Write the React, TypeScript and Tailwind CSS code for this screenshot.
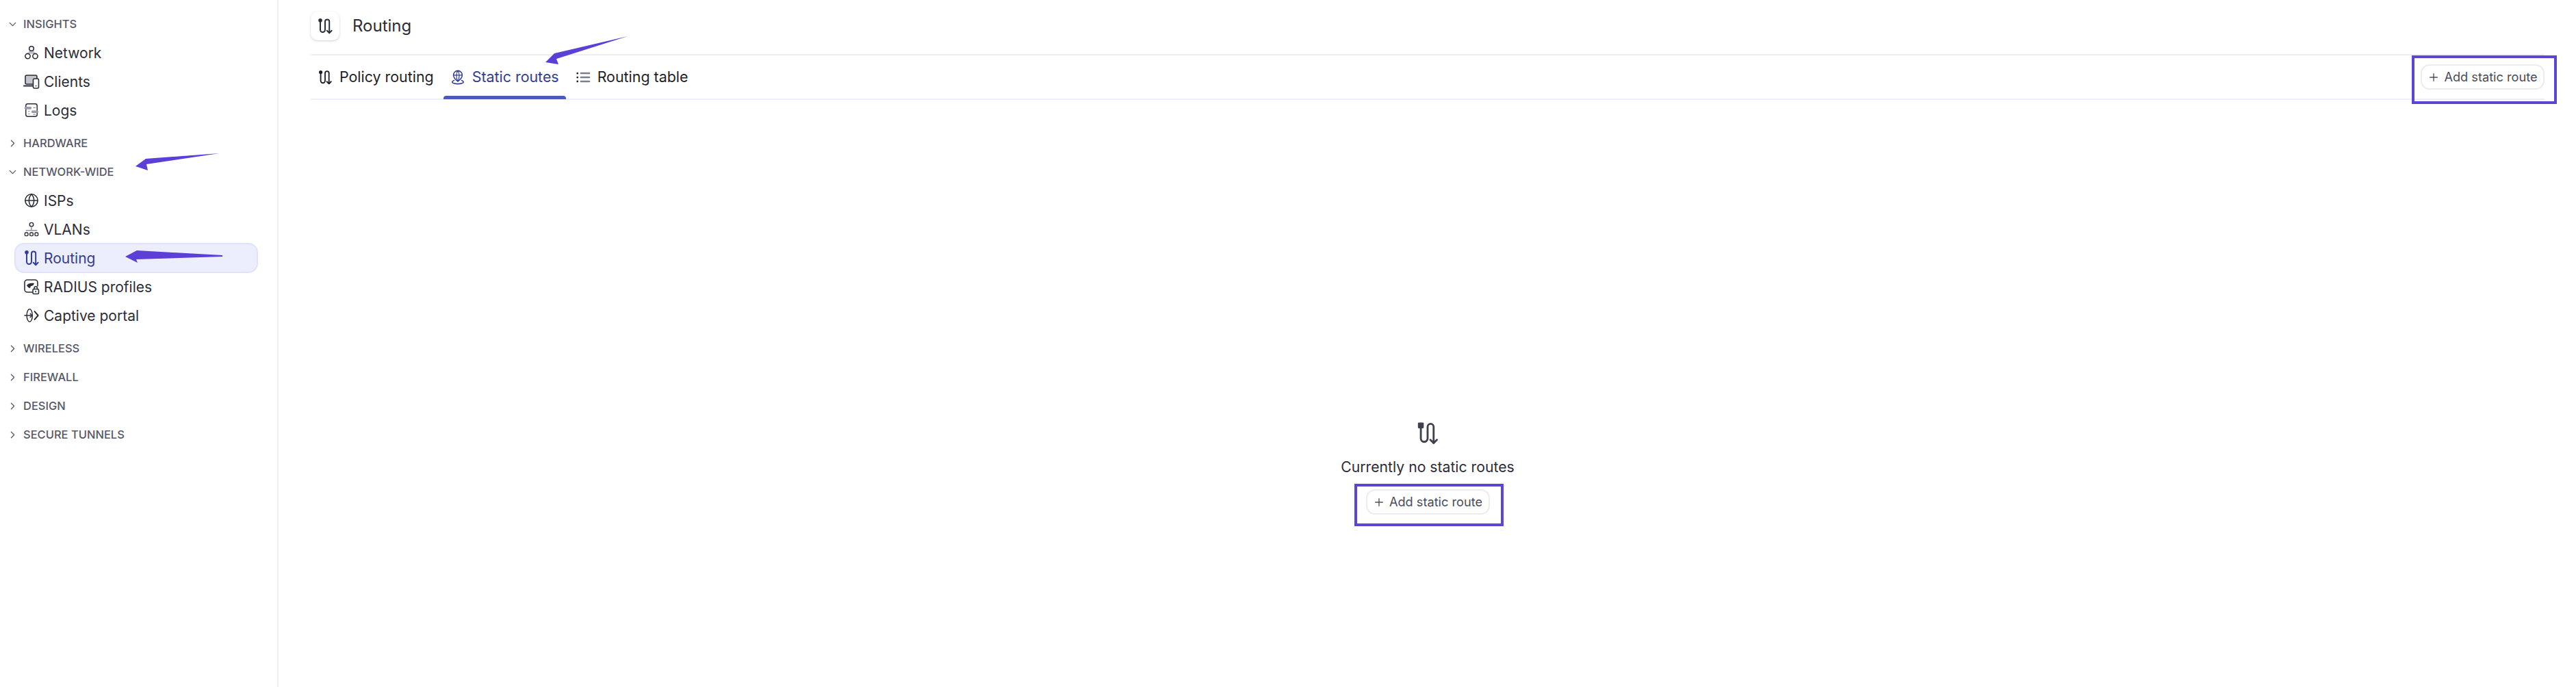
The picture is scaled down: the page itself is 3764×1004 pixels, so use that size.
import { ReactNode } from 'react';
import { ChevronDown, ChevronRight, Globe, Plus } from 'lucide-react';

// icons drawn by hand, lucide has no close match for these
function RoutingIcon({ className }: { className?: string }) {
  return (
    <svg viewBox="0 0 24 24" fill="none" stroke="currentColor" strokeWidth="2" strokeLinecap="round" strokeLinejoin="round" className={className}>
      <circle cx="5" cy="3.8" r="2.8" fill="currentColor" stroke="none" />
      <path d="M5 6v11.5a3.5 3.5 0 0 0 7 0V5.5a3 3 0 0 1 6.2 0V22" />
      <path d="M14.8 18.8l3.4 3.4 3.4-3.4" />
    </svg>
  );
}

function BlockRoutingIcon() {
  return (
    <svg viewBox="0 0 24 24" fill="none" stroke="currentColor" strokeWidth="2" strokeLinecap="round" strokeLinejoin="round" className="w-[34px] h-[34px] text-[#3f414e]">
      <rect x="2" y="1" width="6" height="6" rx="1" fill="currentColor" stroke="none" />
      <path d="M5 6v11.5a3.5 3.5 0 0 0 7 0V5.5a3 3 0 0 1 6.2 0V22" />
      <path d="M14.8 18.8l3.4 3.4 3.4-3.4" />
    </svg>
  );
}

function NetworkIcon() {
  return (
    <svg viewBox="0 0 24 24" fill="none" stroke="currentColor" strokeWidth="1.7" className="w-[22px] h-[22px]">
      <path d="M9 8l-3 6h12l-3-6z" fill="#b9bcc6" stroke="none" />
      <circle cx="12" cy="5.5" r="3.6" fill="#fff" />
      <circle cx="6" cy="17.5" r="4" fill="#fff" />
      <circle cx="18" cy="17.5" r="4" fill="#fff" />
    </svg>
  );
}

function ClientsIcon() {
  return (
    <svg viewBox="0 0 24 24" fill="none" stroke="currentColor" strokeWidth="1.6" strokeLinecap="round" className="w-[24px] h-[24px]">
      <rect x="3" y="3" width="17" height="13" rx="2" fill="#c4c6ce" />
      <path d="M1 18.5h14" strokeWidth="2" />
      <rect x="14.5" y="8" width="8" height="14" rx="2" fill="#fff" />
      <path d="M18.5 18.5v.2" />
    </svg>
  );
}

function LogsIcon() {
  return (
    <svg viewBox="0 0 24 24" fill="none" stroke="currentColor" strokeWidth="1.6" strokeLinecap="round" className="w-[22px] h-[22px]">
      <rect x="3" y="2" width="18" height="20" rx="3" />
      <rect x="1" y="6.5" width="11" height="4" rx="1.5" fill="#9a9da8" stroke="none" />
      <rect x="12" y="12.5" width="11" height="4" rx="1.5" fill="#9a9da8" stroke="none" />
      <path d="M15 8h3M7 14h2M7 18h2M15 19h3" strokeWidth="1.2" stroke="#9a9da8" />
    </svg>
  );
}

function VlansIcon() {
  return (
    <svg viewBox="0 0 24 24" fill="none" stroke="currentColor" strokeWidth="1.6" className="w-[22px] h-[22px]">
      <circle cx="12" cy="4.5" r="3" />
      <path d="M12 8v6M3 14h18" stroke="#8d909c" />
      <rect x="1.5" y="17.5" width="5" height="5" rx="1.5" />
      <rect x="9.5" y="17.5" width="5" height="5" rx="1.5" />
      <rect x="17.5" y="17.5" width="5" height="5" rx="1.5" />
    </svg>
  );
}

function RadiusIcon() {
  return (
    <svg viewBox="0 0 24 24" fill="none" stroke="currentColor" strokeWidth="1.6" strokeLinecap="round" className="w-[24px] h-[24px]">
      <path d="M13 20H6a4 4 0 0 1-4-4V6a4 4 0 0 1 4-4h11a4 4 0 0 1 4 4v5" />
      <path d="M5 10c2-3 6-4 11-3-1 3-3 4-5 4l-1 3c-2 0-4-2-5-4z" fill="currentColor" stroke="none" />
      <rect x="14" y="15.5" width="8.5" height="7" rx="1.5" fill="#fff" />
      <path d="M16 15.5v-1.5a2.2 2.2 0 0 1 4.4 0v1.5" />
      <path d="M18.2 18.5v1" />
    </svg>
  );
}

function PortalIcon() {
  return (
    <svg viewBox="0 0 24 24" fill="none" stroke="currentColor" strokeWidth="1.6" strokeLinecap="round" strokeLinejoin="round" className="w-[22px] h-[22px]">
      <ellipse cx="9" cy="12" rx="4.5" ry="10" />
      <path d="M1 12h12" />
      <path d="M10 9l3 3-3 3" />
      <path d="M17 5.5l5.5 6.5-5.5 6.5" strokeWidth="2.2" />
    </svg>
  );
}

function StaticIcon() {
  return (
    <svg viewBox="0 0 24 24" fill="none" stroke="currentColor" strokeWidth="1.7" strokeLinecap="round" strokeLinejoin="round" className="w-[22px] h-[22px]">
      <path d="M12 18.5c-4-3-7-6-7-10a7 7 0 0 1 14 0c0 4-3 7-7 10z" />
      <path d="M5.5 8.5h13M12 1.5c-3 4-3 11 0 17M12 1.5c3 4 3 11 0 17" strokeWidth="1.3" />
      <path d="M6 17c-2 .8-3 1.6-3 2.5C3 21 7 22.5 12 22.5s9-1.5 9-3c0-.9-1-1.7-3-2.5" />
    </svg>
  );
}

function TableIcon() {
  return (
    <svg viewBox="0 0 24 24" fill="none" strokeLinecap="round" className="w-[22px] h-[22px]">
      <path d="M3 5.5v.1M3 12v.1M3 18.5v.1" stroke="#1f2430" strokeWidth="3" />
      <path d="M8.5 5.5H22M8.5 12H22M8.5 18.5H22" stroke="#7d808c" strokeWidth="2.6" />
    </svg>
  );
}

function SectionRow({ label, open }: { label: string; open?: boolean }) {
  return (
    <div className="h-[42px] flex items-center text-[#565869]">
      <span className="w-[34px] flex justify-center pl-[2px]">
        {open ? <ChevronDown className="w-[17px] h-[17px]" strokeWidth={1.8} /> : <ChevronRight className="w-[17px] h-[17px]" strokeWidth={1.8} />}
      </span>
      <span className="text-[16.5px] font-medium">{label}</span>
    </div>
  );
}

function NavItem({ icon, label, active }: { icon: ReactNode; label: string; active?: boolean }) {
  const cls = active
    ? 'h-[44px] -my-px text-[#323d96] bg-[#eceefd] border-2 border-[#dfe3fa] rounded-[14px]'
    : 'h-[42px] text-[#2b2d3a] border-2 border-transparent';
  return (
    <div className={'ml-[21px] w-[356px] flex items-center pl-[11px] ' + cls}>
      <span className="w-[24px] flex justify-center mr-[6px]">{icon}</span>
      <span className="text-[21px] leading-none">{label}</span>
    </div>
  );
}

function AddButton({ frame }: { frame: string }) {
  return (
    <button className="relative w-[181px] h-[37px] flex items-center justify-center gap-[6px] rounded-[13px] border-2 border-[#ececef] bg-white text-[#4a4c5c] text-[18.2px]">
      <Plus className="w-[18px] h-[18px]" strokeWidth={1.8} />
      Add static route
      <span className={'absolute border-[4px] border-[#5b45d3] ' + frame} />
    </button>
  );
}

function Tab({ icon, label, active }: { icon: ReactNode; label: string; active?: boolean }) {
  return (
    <div className={'relative h-full flex items-center gap-[10px] px-[10px] text-[21.4px] ' + (active ? 'text-[#323d96]' : 'text-[#1d1f2b]')}>
      {icon}
      {label}
      {active && <span className="absolute left-0 right-0 bottom-[-1px] h-[5px] rounded-t-[4px] bg-[#4a5bbd]" />}
    </div>
  );
}

export default function App() {
  return (
    <div className="relative h-screen flex bg-white overflow-hidden font-['Inter',sans-serif]">
      <aside className="w-[407px] shrink-0 border-r-2 border-[#eceef2] pt-[14px] flex flex-col">
        <SectionRow label="INSIGHTS" open />
        <div className="pb-[6px] flex flex-col">
          <NavItem icon={<NetworkIcon />} label="Network" />
          <NavItem icon={<ClientsIcon />} label="Clients" />
          <NavItem icon={<LogsIcon />} label="Logs" />
        </div>
        <SectionRow label="HARDWARE" />
        <SectionRow label="NETWORK-WIDE" open />
        <div className="pb-[6px] flex flex-col">
          <NavItem icon={<Globe className="w-[22px] h-[22px]" strokeWidth={1.7} />} label="ISPs" />
          <NavItem icon={<VlansIcon />} label="VLANs" />
          <NavItem icon={<RoutingIcon className="w-[24px] h-[24px]" />} label="Routing" active />
          <NavItem icon={<RadiusIcon />} label="RADIUS profiles" />
          <NavItem icon={<PortalIcon />} label="Captive portal" />
        </div>
        <SectionRow label="WIRELESS" />
        <SectionRow label="FIREWALL" />
        <SectionRow label="DESIGN" />
        <SectionRow label="SECURE TUNNELS" />
      </aside>

      <main className="flex-1 pl-[47px] pr-[46px] flex flex-col">
        <header className="h-[79px] flex items-center gap-[19px] pb-[3px] text-[#2b2d3a]">
          <div className="w-[42px] h-[42px] rounded-[10px] bg-white shadow-[0_1px_3px_rgba(30,35,60,0.22)] flex items-center justify-center">
            <RoutingIcon className="w-[24px] h-[24px]" />
          </div>
          <h1 className="text-[24px] leading-none font-normal">Routing</h1>
        </header>

        <div className="h-[67px] border-y-2 border-[#eceff6] flex items-center">
          <div className="h-full flex items-center">
            <Tab icon={<RoutingIcon className="w-[22px] h-[22px]" />} label="Policy routing" />
            <span className="w-[4px]" />
            <Tab icon={<StaticIcon />} label="Static routes" active />
            <span className="w-[4px]" />
            <Tab icon={<TableIcon />} label="Routing table" />
          </div>
          <div className="ml-auto">
            <AddButton frame="-left-[15px] -right-[20px] -top-[15px] -bottom-[23px]" />
          </div>
        </div>

        <section className="flex flex-col items-center pt-[470px]">
          <BlockRoutingIcon />
          <p className="mt-[19px] text-[21.2px] leading-[26px] text-[#2b2d3a]">Currently no static routes</p>
          <div className="mt-[20px]">
            <AddButton frame="-left-[19px] -right-[22px] -top-[10px] -bottom-[19px]" />
          </div>
        </section>
      </main>

      {/* annotation arrows on top of the page */}
      <svg className="absolute inset-0 w-full h-full pointer-events-none" fill="#5b3fd6">
        <polygon points="321,224 213,232 198,243 216,249 214,240" />
        <polygon points="325,373 200,366 183,375 201,384 199,379 325,375" />
        <polygon points="917,53 810,78 797,91 816,94 813,86" />
      </svg>
    </div>
  );
}
